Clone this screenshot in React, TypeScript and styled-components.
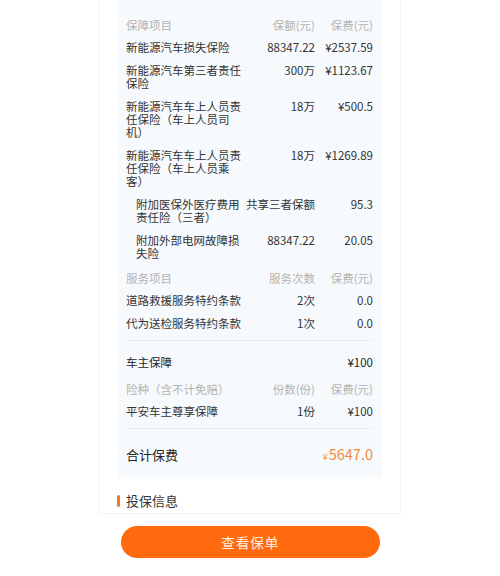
import styled, { createGlobalStyle } from 'styled-components';

const GlobalStyle = createGlobalStyle`
  html, body {
    margin: 0;
    padding: 0;
    background: #ffffff;
  }
  body {
    font-family: "Noto Sans CJK SC", "Noto Sans", sans-serif;
    color: #333333;
  }
`;

const Page = styled.div`
  width: 500px;
  height: 576px;
  overflow: hidden;
  display: flex;
  flex-direction: column;
  align-items: center;
`;

const Card = styled.div`
  width: 302px;
  box-sizing: border-box;
  padding: 0 18px 4px;
  border: 1px solid #f1f3f6;
  border-top: none;
  background: #ffffff;
`;

const Panel = styled.div`
  background: #f7fafd;
  padding: 13px 9px 13px 8px;
`;

const Row = styled.div<{ $indent?: boolean; $head?: boolean; $strong?: boolean }>`
  display: grid;
  grid-template-columns: 1fr 71px 58px;
  padding: ${({ $head }) => ($head ? '6px 0 4px' : '5px 0')};
  padding-left: ${({ $indent }) => ($indent ? '10px' : '0')};
  font-size: 11.5px;
  line-height: 13px;
  color: ${({ $head, $strong }) => ($head ? '#b3b3b3' : $strong ? '#222222' : '#333333')};
`;

const Name = styled.div`
  padding-right: 2px;
`;

const Cell = styled.div`
  text-align: right;
  white-space: nowrap;
`;

const Divider = styled.div<{ $top: number; $bottom: number }>`
  height: 1px;
  background: #e9eef3;
  margin: ${({ $top, $bottom }) => `${$top}px 0 ${$bottom}px`};
`;

const TotalRow = styled.div`
  display: flex;
  justify-content: space-between;
  align-items: baseline;
  color: #222222;
  font-size: 13px;
  line-height: 14px;
`;

const TotalAmount = styled.div`
  color: #f08a3a;
  font-size: 14.5px;
  line-height: 14px;
`;

const Yuan = styled.span`
  font-size: 9px;
  margin-right: 1px;
`;

const SectionTitle = styled.div`
  display: flex;
  align-items: center;
  gap: 6px;
  margin-top: 16px;
  margin-left: -1px;
  font-size: 13px;
  line-height: 16px;
  color: #333333;
  &::before {
    content: '';
    width: 3px;
    height: 12px;
    border-radius: 1.5px;
    background: #f07a22;
  }
`;

const ViewButton = styled.button`
  margin-top: 12px;
  width: 259px;
  height: 32px;
  border: none;
  border-radius: 16px;
  background: #ff6a0f;
  color: #ffeadd;
  font-family: "Noto Sans CJK SC", "Noto Sans", sans-serif;
  font-size: 14px;
  letter-spacing: 0.5px;
  cursor: pointer;
`;

type Item = { name: string; amount: string; fee: string; indent?: boolean };

const coverage: Item[] = [
  { name: '新能源汽车损失保险', amount: '88347.22', fee: '¥2537.59' },
  { name: '新能源汽车第三者责任保险', amount: '300万', fee: '¥1123.67' },
  { name: '新能源汽车车上人员责任保险（车上人员司机）', amount: '18万', fee: '¥500.5' },
  { name: '新能源汽车车上人员责任保险（车上人员乘客）', amount: '18万', fee: '¥1269.89' },
  { name: '附加医保外医疗费用责任险（三者）', amount: '共享三者保额', fee: '95.3', indent: true },
  { name: '附加外部电网故障损失险', amount: '88347.22', fee: '20.05', indent: true },
];

const services: Item[] = [
  { name: '道路救援服务特约条款', amount: '2次', fee: '0.0' },
  { name: '代为送检服务特约条款', amount: '1次', fee: '0.0' },
];

export default function App() {
  return (
    <Page>
      <GlobalStyle />
      <Card>
        <Panel>
          <Row $head>
            <Name>保障项目</Name>
            <Cell>保额(元)</Cell>
            <Cell>保费(元)</Cell>
          </Row>
          {coverage.map((item) => (
            <Row key={item.name} $indent={item.indent}>
              <Name>{item.name}</Name>
              <Cell>{item.amount}</Cell>
              <Cell>{item.fee}</Cell>
            </Row>
          ))}
          <Row $head style={{ marginTop: 1 }}>
            <Name>服务项目</Name>
            <Cell>服务次数</Cell>
            <Cell>保费(元)</Cell>
          </Row>
          {services.map((item) => (
            <Row key={item.name}>
              <Name>{item.name}</Name>
              <Cell>{item.amount}</Cell>
              <Cell>{item.fee}</Cell>
            </Row>
          ))}
          <Divider $top={5} $bottom={10} />
          <Row $strong>
            <Name>车主保障</Name>
            <Cell />
            <Cell>¥100</Cell>
          </Row>
          <Row $head style={{ paddingTop: 9 }}>
            <Name>险种（含不计免赔）</Name>
            <Cell>份数(份)</Cell>
            <Cell>保费(元)</Cell>
          </Row>
          <Row>
            <Name>平安车主尊享保障</Name>
            <Cell>1份</Cell>
            <Cell>¥100</Cell>
          </Row>
          <Divider $top={5} $bottom={18} />
          <TotalRow>
            <span>合计保费</span>
            <TotalAmount>
              <Yuan>¥</Yuan>5647.0
            </TotalAmount>
          </TotalRow>
        </Panel>
        <SectionTitle>投保信息</SectionTitle>
      </Card>
      <ViewButton>查看保单</ViewButton>
    </Page>
  );
}
